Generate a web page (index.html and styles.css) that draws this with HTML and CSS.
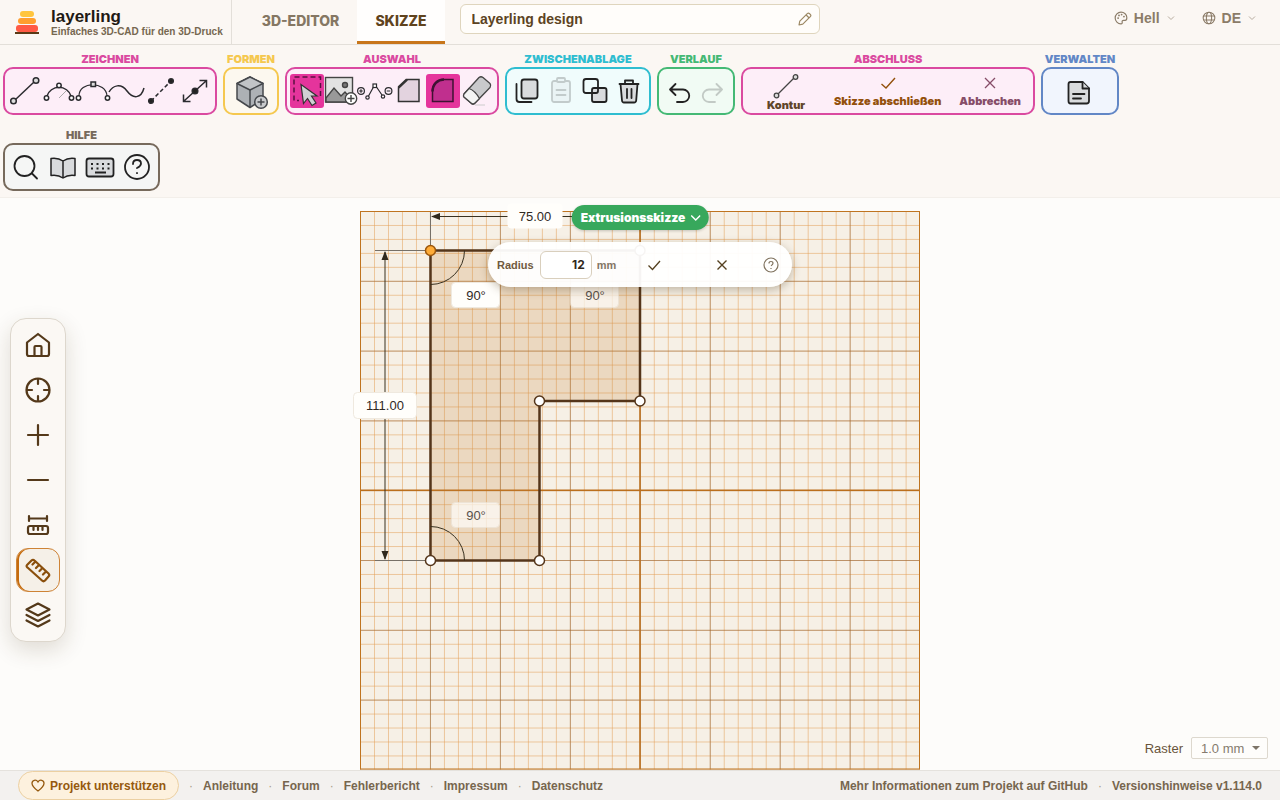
FILE: index.html
```html
<!DOCTYPE html>
<html lang="de">
<head>
<meta charset="utf-8">
<title>layerling</title>
<link rel="stylesheet" href="styles.css">
</head>
<body>
<div class="app">
  <header class="header">
    <div class="brand">
      <svg class="logo" width="24" height="26" viewBox="0 0 24 26">
        <rect x="5" y="1" width="14" height="6" rx="3" fill="#ffc53d"/>
        <rect x="3" y="8" width="18" height="6" rx="3" fill="#ff9f2e"/>
        <rect x="1" y="15" width="22" height="7" rx="3" fill="#ff5a45"/>
        <rect x="0" y="22" width="24" height="2" fill="#5a3a16"/>
      </svg>
      <div class="brand-text">
        <div class="brand-name">layerling</div>
        <div class="brand-sub">Einfaches 3D-CAD für den 3D-Druck</div>
      </div>
    </div>
    <nav class="tabs">
      <button class="tab">3D-EDITOR</button>
      <button class="tab tab-active">SKIZZE</button>
    </nav>
    <div class="title-field">
      <input class="title-input" aria-label="Projektname" value="Layerling design">
      <svg class="title-pencil" width="14" height="14" viewBox="0 0 14 14" fill="none" stroke="#9c8863" stroke-width="1.2" stroke-linejoin="round"><path d="M1 13l.8-3.800L9.300 1.700q1-1 2-.2l1.200 1.200q.8 1-.2 2L4.800 12.200zM8.200 3l3 3"/></svg>
    </div>
    <div class="prefs">
      <button class="pref">
        <svg width="14" height="14" viewBox="0 0 24 24" fill="none" stroke="currentColor" stroke-width="2"><path d="M12 2a10 10 0 1 0 0 20c1.700 0 2.500-1.200 2-2.600-.6-1.800.5-3.400 2.400-3.400H19c2 0 3-1.800 3-4.500C22 6 17.500 2 12 2z"/><path d="M7 12h.1M8.500 7.500h.1M13 6h.1M17 9.500h.1" stroke-width="3" stroke-linecap="round"/></svg>
        <span>Hell</span>
        <svg class="chev" width="8" height="8" viewBox="0 0 8 8" fill="none" stroke="currentColor"><path d="M1 2.500l3 3 3-3"/></svg>
      </button>
      <button class="pref">
        <svg width="14" height="14" viewBox="0 0 24 24" fill="none" stroke="currentColor" stroke-width="1.800"><circle cx="12" cy="12" r="10"/><ellipse cx="12" cy="12" rx="4.500" ry="10"/><path d="M3 8.500h18M3 15.500h18"/></svg>
        <span>DE</span>
        <svg class="chev" width="8" height="8" viewBox="0 0 8 8" fill="none" stroke="currentColor"><path d="M1 2.500l3 3 3-3"/></svg>
      </button>
    </div>
  </header>

  <section class="ribbon">
    <div class="group pink">
      <div class="group-label">ZEICHNEN</div>
      <div class="group-box">
        <button class="tool" aria-label="Linie"><svg viewBox="0 0 34 34" class="draw"><path d="M7.500 25.500l18-17"/><circle cx="5.500" cy="27" r="2.800" fill="#ddd"/><circle cx="28" cy="6.500" r="2.800" fill="#ddd"/></svg></button>
        <button class="tool" aria-label="Bogen"><svg viewBox="0 0 34 34" class="draw"><path d="M5 22a12.500 12 0 0 1 24 0"/><path d="M17 24l7-7" stroke="#aaa" stroke-width="1"/><circle cx="4.500" cy="24" r="2.200" fill="#fff"/><circle cx="29.500" cy="24" r="2.200" fill="#fff"/><circle cx="17" cy="11.500" r="2.200" fill="#fff"/></svg></button>
        <button class="tool" aria-label="Kurve"><svg viewBox="0 0 34 34" class="draw"><path d="M3 22c0-15 27-15 28 0" stroke-width="1.200"/><circle cx="2.500" cy="24" r="2.200" fill="#fff"/><circle cx="31.500" cy="24" r="2.200" fill="#fff"/><rect x="15" y="8" width="4.500" height="4.500" fill="#ddd"/></svg></button>
        <button class="tool" aria-label="Spline"><svg viewBox="0 0 34 34" class="draw"><path d="M-1 18C3 11 11 9 17 17s14 8 17-3"/></svg></button>
        <button class="tool" aria-label="Konstruktionslinie"><svg viewBox="0 0 34 34" class="draw"><path d="M7 27L27 7" stroke-dasharray="4 2.500"/><circle cx="7" cy="27" r="2.300" fill="#222"/><circle cx="27" cy="7" r="2.300" fill="#222"/></svg></button>
        <button class="tool" aria-label="Bemaßung"><svg viewBox="0 0 34 34" class="draw"><path d="M6 27L28 7M5.500 20.500v7h7M21.500 6.500H28.500V13.500"/><circle cx="17" cy="17" r="2.800" fill="#222"/></svg></button>
      </div>
    </div>
    <div class="group yellow">
      <div class="group-label">FORMEN</div>
      <div class="group-box">
        <button class="tool" aria-label="Formen"><svg viewBox="0 0 34 34" fill="#adb1b5" stroke="#45484c" stroke-width="1.500" stroke-linejoin="round"><path d="M3 9.500L16 3l13 6.500V25l-13 8.500L3 25z"/><path d="M3 9.500L16 3l13 6.500L16 16z" fill="#c1c4c7"/><path d="M16 16v17.500"/><circle cx="27" cy="28" r="6.300" fill="#c8cacc"/><path d="M27 24.500v7M23.500 28h7"/></svg></button>
      </div>
    </div>
    <div class="group pink">
      <div class="group-label">AUSWAHL</div>
      <div class="group-box">
        <button class="tool tool-on" aria-label="Auswählen"><svg viewBox="0 0 34 34" fill="none" stroke="#5a1040" stroke-width="1.500"><path d="M30.500 22V3H4v23.500h5" stroke-dasharray="5 3"/><path d="M11 10.500l2.500 19 4-5 4.500 7 4-2.500-4.500-7H27z" fill="#d1d1d4" stroke="#333" stroke-width="1.200"/></svg></button>
        <button class="tool" aria-label="Bild einfügen"><svg viewBox="0 0 34 34" fill="#e2e2e2" stroke="#444" stroke-width="1.400"><rect x="1.500" y="3.500" width="27" height="24.500"/><path d="M2 28V24l8-10 7 8 4-4 7 8v2z" fill="#999"/><circle cx="21" cy="11" r="2.500" fill="#777"/><circle cx="27" cy="24.500" r="5.700" fill="#fff"/><path d="M27 21v7M23.500 24.500h7"/></svg></button>
        <button class="tool" aria-label="Punkte bearbeiten"><svg viewBox="0 0 34 34" class="draw thin"><path d="M10.500 22l5-9M18.500 13l5.500 8"/><rect x="15" y="10" width="3.500" height="3.500" fill="#fff"/><circle cx="9.500" cy="23.500" r="1.700"/><circle cx="25" cy="22.500" r="1.700"/><circle cx="3" cy="17" r="3.400"/><circle cx="30.500" cy="17" r="3.400"/><path d="M1.200 17h3.600M3 15.200v3.600M28.700 17h3.600"/></svg></button>
        <button class="tool" aria-label="Fase"><svg viewBox="0 0 34 34" fill="#e3d3df" stroke="#333"><path d="M6.500 27.500V13.500L15 5.500h12v22z" stroke-width="1.500"/><path d="M6.500 13.500l8.500-8" stroke-width="2.500"/></svg></button>
        <button class="tool tool-on" aria-label="Abrunden"><svg viewBox="0 0 34 34" fill="#c02f8e" stroke="#3f1232"><path d="M6.500 27.500V17c0-7 5-11.500 11.500-11.500h9v22z" stroke-width="1.500"/><path d="M6.500 17.500c0-7 5-12 11.500-12" stroke-width="2.500"/></svg></button>
        <button class="tool" aria-label="Radieren"><svg viewBox="0 0 34 34" fill="#c9c9cc" stroke="#444" stroke-width="1.300" stroke-linejoin="round"><path d="M4 20L19 3.500q2-1.500 4 0l7 6q1.500 2 0 4L15 29q-2 2-4 0l-7-6q-1-1 0-3z"/><path d="M4 20l5-5.500q6 2 10.500 10L15 29q-2 2-4 0l-7-6q-1-1 0-3z" fill="#f4f4f4"/><path d="M15 31h10" stroke="#ccc" stroke-width="1"/></svg></button>
      </div>
    </div>
    <div class="group cyan">
      <div class="group-label">ZWISCHENABLAGE</div>
      <div class="group-box">
        <button class="tool" aria-label="Kopieren"><svg viewBox="0 0 34 34" class="solid"><rect x="11.500" y="5.500" width="16" height="19" rx="2.500"/><path d="M6.500 10v15q0 3 3 3h12" fill="none"/></svg></button>
        <button class="tool" aria-label="Einfügen" disabled><svg viewBox="0 0 34 34" class="solid"><rect x="8" y="7" width="18" height="21" rx="2"/><rect x="13" y="4" width="8" height="4" rx="1"/><path d="M12.500 16h9M12.500 21h9"/></svg></button>
        <button class="tool" aria-label="Duplizieren"><svg viewBox="0 0 34 34" class="solid"><rect x="14" y="14" width="14.500" height="14" rx="2"/><path d="M14 19H8q-2.500 0-2.500-2.500V7.500Q5.500 5 8 5h9.500Q20 5 20 7.500V17q0 2-2 2z" fill="none"/></svg></button>
        <button class="tool" aria-label="Löschen"><svg viewBox="0 0 34 34" class="solid"><path d="M8.500 10L10 26.500q.2 2 2 2h10q2 0 2.200-2L25.500 10z"/><path d="M7.500 10h19M13 10V6.500h8V10M15 15v9M19.500 15v9" fill="none"/></svg></button>
      </div>
    </div>
    <div class="group green">
      <div class="group-label">VERLAUF</div>
      <div class="group-box">
        <button class="tool" aria-label="Rückgängig"><svg viewBox="0 0 34 34" class="solid open"><path d="M13.500 10l-5.500 5.500 5.500 5.500M8 15.500h13a6.200 6.200 0 0 1 0 12.500h-6"/></svg></button>
        <button class="tool" aria-label="Wiederholen" disabled><svg viewBox="0 0 34 34" class="solid open"><path d="M20.500 10l5.500 5.500-5.500 5.500M26 15.500H13a6.200 6.200 0 0 0 0 12.500h6"/></svg></button>
      </div>
    </div>
    <div class="group pink">
      <div class="group-label">ABSCHLUSS</div>
      <div class="group-box wide">
        <button class="action brown"><svg width="26" height="26" viewBox="0 0 26 26" fill="#ddd" stroke="#444" stroke-width="1.300"><path d="M3 23L22 4"/><circle cx="3.500" cy="22.500" r="2.300"/><circle cx="22.500" cy="4" r="2.300"/></svg><span>Kontur</span></button>
        <button class="action amber"><svg width="16" height="16" viewBox="0 0 16 16" fill="none" stroke="currentColor" stroke-width="1.400"><path d="M1.500 9l4.500 4L15 3"/></svg><span>Skizze abschließen</span></button>
        <button class="action plum"><svg width="16" height="16" viewBox="0 0 16 16" fill="none" stroke="currentColor" stroke-width="1.300"><path d="M3 3l10 10M13 3L3 13"/></svg><span>Abbrechen</span></button>
      </div>
    </div>
    <div class="group blue">
      <div class="group-label">VERWALTEN</div>
      <div class="group-box">
        <button class="tool" aria-label="Dokument"><svg viewBox="0 0 34 34" class="solid"><path d="M5.500 10q0-2 2-2h12l6.500 6.500V27q0 2.500-2.500 2.500h-16q-2 0-2-2.500z"/><path d="M19.500 8v6.500H26M10 20h11.500M10 24.500h8"/></svg></button>
      </div>
    </div>
    <div class="group gray">
      <div class="group-label">HILFE</div>
      <div class="group-box help">
        <button class="tool" aria-label="Suchen"><svg viewBox="0 0 34 34" class="solid open"><circle cx="15.500" cy="16" r="10"/><path d="M23 23.500l5 5"/></svg></button>
        <button class="tool" aria-label="Handbuch"><svg viewBox="0 0 34 34" class="solid"><path d="M17 11q-5-3.500-12-2.500v17q7-1 12 2.500 5-3.500 12-2.500v-17q-7-1-12 2.500zM17 11v17" stroke-width="1.500"/></svg></button>
        <button class="tool" aria-label="Tastatur"><svg viewBox="0 0 34 34" class="solid"><rect x="3.500" y="8.500" width="27" height="18" rx="2.500" stroke-width="1.800"/><path d="M8 14h2M13.500 14h2M19 14h2M24.500 14h2M8 18.500h2M13.500 18.500h2M19 18.500h2M24.500 18.500h2M12 22.500h11" stroke-linecap="butt"/></svg></button>
        <button class="tool" aria-label="Hilfe"><svg viewBox="0 0 34 34" class="solid open"><circle cx="17" cy="17" r="12"/><path d="M13 14q0-4 4-4t4 3.500q0 2.500-4 4.500M17 23v.2"/></svg></button>
      </div>
    </div>
  </section>

  <main class="stage">
    <svg class="sketch" viewBox="0 198 1280 572" preserveAspectRatio="xMidYMid meet">
      <defs>
        <pattern id="minor" x="360" y="211" width="13.990" height="13.960" patternUnits="userSpaceOnUse"><path d="M0 0H14M0 0V14" stroke="#e08c35" stroke-opacity=".85" fill="none"/></pattern>
        <pattern id="major" x="360" y="211" width="69.950" height="69.800" patternUnits="userSpaceOnUse"><path d="M0 0H70M0 0V70" stroke="#75451c" stroke-opacity=".8" fill="none"/></pattern>
      </defs>
      <rect x="360" y="211" width="560" height="558.500" fill="#f6f0e6"/>
      <rect x="360" y="211" width="560" height="558.500" fill="url(#minor)"/>
      <rect x="360" y="211" width="560" height="558.500" fill="url(#major)"/>
      <path d="M360 490.300H920M640 211V769" stroke="#bb6f1d" stroke-width="1.500"/>
      <rect x="360.500" y="211.500" width="559" height="557.500" fill="none" stroke="#bf7420"/>
      <path d="M430.500 250.500H640V401H539.500V560.500H430.500z" fill="#c4843a" fill-opacity=".22" stroke="#54351a" stroke-width="2.500"/>
      <g fill="none" stroke="#38301f">
        <path d="M375 250.500H430M375 560.500H430M430.500 212V250" stroke="#777067"/>
        <path d="M385 252V559M432 216.500H572M464.500 250.500a34 34 0 0 1-34 34M430.500 526.500a34 34 0 0 1 34 34"/>
      </g>
      <path d="M385 251l-3.500 9h7zM385 560l-3.500-9h7zM431 216.500l9-3.500v7z" fill="#2f281c"/>
      <g fill="#fff" stroke="#54351a" stroke-width="1.500">
        <circle cx="430.500" cy="250.500" r="5" fill="#ffac38" stroke="#9b560c"/>
        <circle cx="640" cy="250.500" r="5"/><circle cx="640" cy="401" r="5"/><circle cx="539.500" cy="401" r="5"/><circle cx="539.500" cy="560.500" r="5"/><circle cx="430.500" cy="560.500" r="5"/>
      </g>
      <g fill="#fffefb" stroke="#efe9df">
        <rect x="507.500" y="203.500" width="55" height="25" rx="4" stroke="none"/>
        <rect x="353.500" y="392.500" width="63" height="26" rx="4"/>
        <rect x="451.500" y="282.500" width="48" height="25" rx="4"/>
        <rect x="570.500" y="282.500" width="48" height="25" rx="4" opacity=".7"/>
        <rect x="451.500" y="502.500" width="48" height="25" rx="4" opacity=".7"/>
      </g>
      <g class="dims">
        <text x="535" y="221">75.00</text>
        <text x="385" y="410">111.00</text>
        <text x="476" y="300">90°</text>
        <text x="595" y="300" opacity=".8">90°</text>
        <text x="476" y="520" opacity=".8">90°</text>
      </g>
    </svg>

    <button class="mode-pill"><span>Extrusionsskizze</span><svg width="10" height="10" viewBox="0 0 10 10" fill="none" stroke="#fff" stroke-width="1.500"><path d="M.5 2.500L5 7l4.500-4.500"/></svg></button>

    <div class="radius-panel">
      <label for="radius">Radius</label>
      <input id="radius" class="radius-input" value="12">
      <span class="unit">mm</span>
      <button class="panel-btn" aria-label="Übernehmen"><svg width="14" height="14" viewBox="0 0 14 14" fill="none" stroke="#54401f" stroke-width="1.300"><path d="M1.500 7.500l4 4 7.500-8.500"/></svg></button>
      <button class="panel-btn" aria-label="Verwerfen"><svg width="14" height="14" viewBox="0 0 14 14" fill="none" stroke="#54401f" stroke-width="1.400"><path d="M2.500 2.500l9 9M11.500 2.500l-9 9"/></svg></button>
      <button class="panel-help" aria-label="Hilfe"><svg width="16" height="16" viewBox="0 0 16 16" fill="none" stroke="#80735f" stroke-width="1.200"><circle cx="8" cy="8" r="7"/><path d="M6 6.500q0-2 2-2t2 1.800q0 1.200-2 2.400M8 11v1"/></svg></button>
    </div>

    <div class="side">
      <button class="side-btn" aria-label="Startansicht"><svg viewBox="0 0 26 26"><path d="M2 10.500L13 2l11 8.500V22q0 2-2 2H4q-2 0-2-2z"/><path d="M9.500 24V15q0-1 1-1h5q1 0 1 1v9"/></svg></button>
      <button class="side-btn" aria-label="Zentrieren"><svg viewBox="0 0 26 26"><circle cx="13" cy="13" r="11.500"/><path d="M13 2v5M13 19v5M2 13h5M19 13h5"/></svg></button>
      <button class="side-btn" aria-label="Vergrößern"><svg viewBox="0 0 26 26"><path d="M13 3v20M3 13h20"/></svg></button>
      <button class="side-btn" aria-label="Verkleinern"><svg viewBox="0 0 26 26"><path d="M3 13h20"/></svg></button>
      <button class="side-btn" aria-label="Maße"><svg viewBox="0 0 26 26"><path d="M4 6.500h18M4 4v5M22 4v5M5 14h16q2 0 2 2v4q0 2-2 2H5q-2 0-2-2v-4q0-2 2-2zM8.500 14v4M13 14v4M17.500 14v4"/></svg></button>
      <button class="side-btn side-on" aria-label="Lineal"><svg viewBox="0 0 26 26"><path d="M2 8l4.500-4.500q1.500-1.500 3 0l14 13q1.500 1.500 0 3L20 23.500q-1.500 1.500-3 0L2.500 10.500Q1 9.500 2 8zM10.500 4.500l-3 3M14 8l-3 3M17.500 11l-3 3M21 14.500l-3 3"/></svg></button>
      <button class="side-btn" aria-label="Ebenen"><svg viewBox="0 0 26 26"><path d="M13 1.500L24.500 7.500 13 13.500 1.500 7.500zM1.500 13L13 19l11.500-6M1.500 18.500L13 24.500l11.500-6"/></svg></button>
    </div>

    <div class="raster">
      <label for="raster">Raster</label>
      <div class="select-wrap">
        <select id="raster"><option>1.0 mm</option></select>
      </div>
    </div>
  </main>

  <footer class="footer">
    <div class="links">
      <a class="support" href="#"><svg width="14" height="13" viewBox="0 0 14 13" fill="none" stroke="currentColor" stroke-width="1.300"><path d="M7 12C3 9 1 7 1 4.200 1 1 5.200 0 7 3c1.800-3 6-2 6 1.200C13 7 11 9 7 12z"/></svg>Projekt unterstützen</a>
      <i>·</i><a href="#">Anleitung</a><i>·</i><a href="#">Forum</a><i>·</i><a href="#">Fehlerbericht</a><i>·</i><a href="#">Impressum</a><i>·</i><a href="#">Datenschutz</a>
    </div>
    <div class="links">
      <a href="#">Mehr Informationen zum Projekt auf GitHub</a><i>·</i><a href="#">Versionshinweise v1.114.0</a>
    </div>
  </footer>
</div>
</body>
</html>
```
FILE: styles.css
```css
* { box-sizing: border-box; }
body {
  margin: 0;
  font-family: "Liberation Sans", Arial, sans-serif;
  color: #5c4322;
  background: #fdfcfa;
}
button { font: inherit; color: inherit; background: none; border: 0; padding: 0; }
svg { display: block; flex: none; }

.app { display: flex; flex-direction: column; height: 100vh; }

.header {
  display: flex;
  height: 45px;
  background: #fbf7f3;
  border-bottom: 1px solid #e3dfd9;
}
.brand {
  display: flex;
  align-items: center;
  gap: 12px;
  padding: 2px 8px 0 15px;
  border-right: 1px solid #e3dfd9;
}
.brand-name { font-size: 17px; line-height: 18px; font-weight: 700; color: #1f1a14; }
.brand-sub { font-size: 10px; line-height: 12px; font-weight: 700; color: #766750; white-space: nowrap; }
.tabs { display: flex; padding-left: 12px; }
.tab {
  padding: 0 18px 3px;
  font-family: Inter, sans-serif;
  font-size: 14px;
  font-weight: 800;
  color: #857763;
}
.tab-active { color: #60431d; background: #fffefd; border-bottom: 3px solid #c8761a; padding: 0 18px; }
.title-field { position: relative; margin: 4px 0 10px 15px; flex: 0 1 360px; }
.title-input {
  width: 100%;
  height: 30px;
  padding: 0 36px 0 11px;
  font: 700 14px "Liberation Sans", Arial, sans-serif;
  color: #5c4322;
  background: #fffdfa;
  border: 1px solid #dfd5bd;
  border-radius: 6px;
}
.title-pencil { position: absolute; right: 8px; top: 8px; }
.prefs { display: flex; gap: 27px; margin-left: auto; padding: 0 24px 8px 0; align-items: center; }
.pref { display: flex; align-items: center; gap: 6px; font-size: 14px; font-weight: 700; color: #8b7c68; }
.chev { margin-left: 1px; opacity: .6; }

.ribbon {
  display: flex;
  flex-wrap: wrap;
  gap: 13px 6px;
  padding: 7px 0 6px 3px;
  background: #fbf7f3;
  border-bottom: 1px solid #f3efea;
}
.group { display: flex; flex-direction: column; gap: 1px; }
.group-label {
  font-family: Inter, sans-serif;
  font-size: 11px;
  line-height: 14px;
  font-weight: 900;
  text-align: center;
  color: var(--tone);
}
.group-box {
  display: flex;
  justify-content: center;
  min-width: 56px;
  height: 48px;
  padding: 5px 3px;
  border: 2px solid var(--tone);
  border-radius: 10px;
  background: var(--tint);
}
.pink { --tone: #da4aa0; --tint: #fdeef8; }
.yellow { --tone: #f5c84f; --tint: #fcf8ef; }
.cyan { --tone: #2fbdd0; --tint: #f0fcfc; }
.green { --tone: #45b975; --tint: #f1fbf4; }
.blue { --tone: #6287c6; --tint: #f1f5fd; }
.gray { --tone: #776a5c; --tint: #f5f6f5; }
.blue .group-box { min-width: 78px; }
.gray .group-box { min-width: 157px; gap: 3px; }
.tool { width: 34px; height: 34px; border-radius: 3px; }
.tool svg { width: 34px; height: 34px; overflow: visible; }
.tool:disabled { opacity: .22; }
.tool-on { background: #e5349c; }
.draw { fill: none; stroke: #2b2b2f; stroke-width: 1.500; }
.thin { stroke-width: 1.200; }
.solid { fill: #d9dbdd; stroke: #222; stroke-width: 1.800; stroke-linecap: round; stroke-linejoin: round; }
.open { fill: none; }
.group-box.wide { justify-content: flex-start; padding: 0 2px 0 13px; min-width: 294px; }
.action {
  display: flex;
  flex-direction: column;
  align-items: center;
  justify-content: flex-end;
  min-width: 60px;
  padding: 0 9px 2px;
  font-family: Inter, sans-serif;
  font-size: 11px;
  line-height: 12px;
  font-weight: 900;
  white-space: nowrap;
}
.brown { color: #60452a; margin-right: 9px; }
.amber { color: #93500c; }
.plum { color: #864d68; }
.amber svg, .plum svg { margin-bottom: 4px; }
.amber, .plum { padding-bottom: 6px; }

.stage { position: relative; flex: 1; min-height: 0; overflow: hidden; }
.sketch { width: 100%; height: 100%; }
.dims text { font-size: 13px; fill: #30291f; text-anchor: middle; }

.mode-pill {
  position: absolute;
  top: 7px;
  left: 50%;
  transform: translateX(-50%);
  display: flex;
  align-items: center;
  gap: 5px;
  height: 25px;
  padding: 0 8px 0 9px;
  border-radius: 13px;
  background: #37a85c;
  color: #fff;
  font-family: Inter, sans-serif;
  font-size: 12px;
  font-weight: 900;
  box-shadow: 0 1px 3px rgba(0, 0, 0, .2);
}
.radius-panel {
  position: absolute;
  top: 44px;
  left: 50%;
  transform: translateX(-50%);
  display: flex;
  align-items: center;
  width: 304px;
  height: 45px;
  padding: 0 13px 0 9px;
  border-radius: 23px;
  background: rgba(255, 255, 255, .95);
  box-shadow: 0 3px 10px rgba(70, 45, 10, .3);
  font-size: 11px;
  font-weight: 700;
  color: #705a40;
}
.radius-input {
  width: 52px;
  height: 28px;
  margin: 0 5px 0 6px;
  padding: 0 6px;
  text-align: right;
  font: 700 12px Inter, sans-serif;
  color: #30271a;
  background: #fff;
  border: 1px solid #d9cfbd;
  border-radius: 6px;
}
.unit { color: #847665; }
.panel-btn { display: flex; justify-content: center; width: 68px; }
.unit + .panel-btn { margin-left: 4px; }
.panel-help { margin-left: auto; }

.side {
  position: absolute;
  top: 120px;
  left: 10px;
  display: flex;
  flex-direction: column;
  gap: 1px;
  padding: 4px 5px;
  background: #fbf8f4;
  border: 1px solid #ddd7cd;
  border-radius: 16px;
  box-shadow: 0 8px 22px rgba(70, 50, 20, .16);
}
.side-btn { display: grid; place-items: center; width: 44px; height: 44px; border-radius: 12px; }
.side-btn svg { width: 26px; height: 26px; fill: none; stroke: #54391a; stroke-width: 2.200; stroke-linecap: round; stroke-linejoin: round; }
.side-on { border: 1px solid #ce8336; box-shadow: inset 2px 0 #c56b0d; background: #f5f0e8; }
.side-btn.side-on svg { stroke: #8a4f0c; }

.raster { position: absolute; right: 12px; bottom: 11px; display: flex; align-items: center; gap: 8px; font-size: 13px; color: #69543a; }
.select-wrap { position: relative; }
.select-wrap::after {
  content: "";
  position: absolute;
  right: 8px;
  top: 9px;
  border: 4px solid transparent;
  border-top-color: #7d7468;
}
.raster select {
  appearance: none;
  width: 77px;
  height: 22px;
  padding: 0 9px;
  font: 13px "Liberation Sans", Arial, sans-serif;
  color: #857b6e;
  background: #fefdfb;
  border: 1px solid #ddd8ce;
  border-radius: 2px;
}

.footer {
  display: flex;
  justify-content: space-between;
  align-items: center;
  height: 30px;
  padding: 0 18px;
  background: #f3f1ef;
  border-top: 1px solid #e5e2dd;
  font-size: 12px;
  font-weight: 700;
}
.links { display: flex; align-items: center; }
.links a { color: #77664e; text-decoration: none; white-space: nowrap; }
.links i { width: 24px; text-align: center; font-style: normal; font-weight: 400; color: #a79b88; }
.links .support {
  display: flex;
  align-items: center;
  gap: 5px;
  height: 29px;
  padding: 0 12px;
  color: #95590e;
  background: #fdf1de;
  border: 1px solid #ecd0a2;
  border-radius: 15px;
}
```
